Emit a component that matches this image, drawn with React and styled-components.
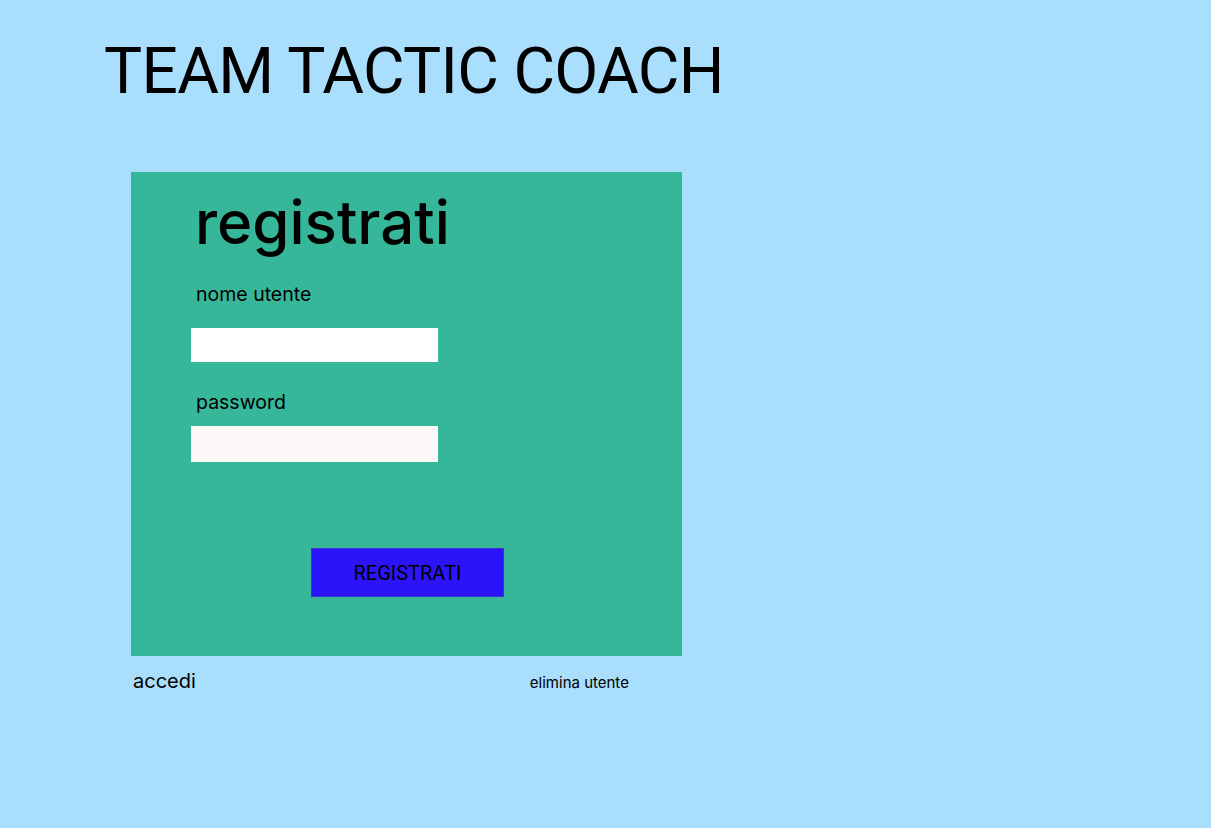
import React from "react";
import styled, { createGlobalStyle } from "styled-components";

const Global = createGlobalStyle`
  html, body { margin: 0; padding: 0; background: #a9defc; }
  body { font-family: Inter, "Noto Sans", sans-serif; color: #000; }
  * { box-sizing: border-box; }
`;

const Page = styled.div`
  width: 1211px;
  height: 828px;
  background: #a9defc;
  padding: 34px 0 0 0;
  display: flex;
  flex-direction: column;
`;

const Title = styled.h1`
  margin: 0 0 0 104px;
  font-family: Roboto, "Liberation Sans", sans-serif;
  font-size: 64px;
  font-weight: 400;
  line-height: 76px;
  letter-spacing: -0.7px;
`;

const Main = styled.div`
  margin: 62px 0 0 131px;
  width: 551px;
  display: flex;
  flex-direction: column;
`;

const Card = styled.form`
  height: 484px;
  background: #37b79a;
  padding: 18px 0 0 60px;
  display: flex;
  flex-direction: column;
`;

const Heading = styled.h2`
  margin: 0 0 0 4px;
  font-size: 60px;
  font-weight: 500;
  line-height: 64px;
`;

const Label = styled.label`
  margin: ${(p) => p.$top}px 0 0 5px;
  font-size: 19.5px;
  line-height: 24px;
`;

const Input = styled.input`
  margin-top: ${(p) => p.$top}px;
  width: 247px;
  height: ${(p) => p.$h}px;
  border: none;
  outline: none;
  background: ${(p) => p.$bg};
  font-family: inherit;
  font-size: 16px;
  padding: 0 8px;
`;

const Button = styled.button`
  margin: 86px 0 0 120px;
  width: 193px;
  height: 49px;
  background: #2c14fa;
  border: 1px solid #3a34d8;
  color: #000;
  font-family: Roboto, "Liberation Sans", sans-serif;
  font-size: 20px;
  font-weight: 400;
  padding: 0;
  cursor: pointer;
`;

const Footer = styled.div`
  display: flex;
  align-items: baseline;
  padding: 13px 0 0 2px;
`;

const FooterLink = styled.a`
  font-size: ${(p) => p.$size}px;
  line-height: 24px;
  color: #000;
  text-decoration: none;
  margin-left: ${(p) => p.$ml || 0}px;
  cursor: pointer;
`;

export default function App() {
  return (
    <>
      <Global />
      <Page>
        <Title>TEAM TACTIC COACH</Title>
        <Main>
          <Card onSubmit={(e) => e.preventDefault()}>
            <Heading>registrati</Heading>
            <Label $top={28}>nome utente</Label>
            <Input $top={22} $h={34} $bg="#ffffff" type="text" />
            <Label $top={28}>password</Label>
            <Input $top={12} $h={36} $bg="#fdf9f8" type="password" />
            <Button type="submit">REGISTRATI</Button>
          </Card>
          <Footer>
            <FooterLink $size={20}>accedi</FooterLink>
            <FooterLink $size={15} $ml={334}>elimina utente</FooterLink>
          </Footer>
        </Main>
      </Page>
    </>
  );
}
